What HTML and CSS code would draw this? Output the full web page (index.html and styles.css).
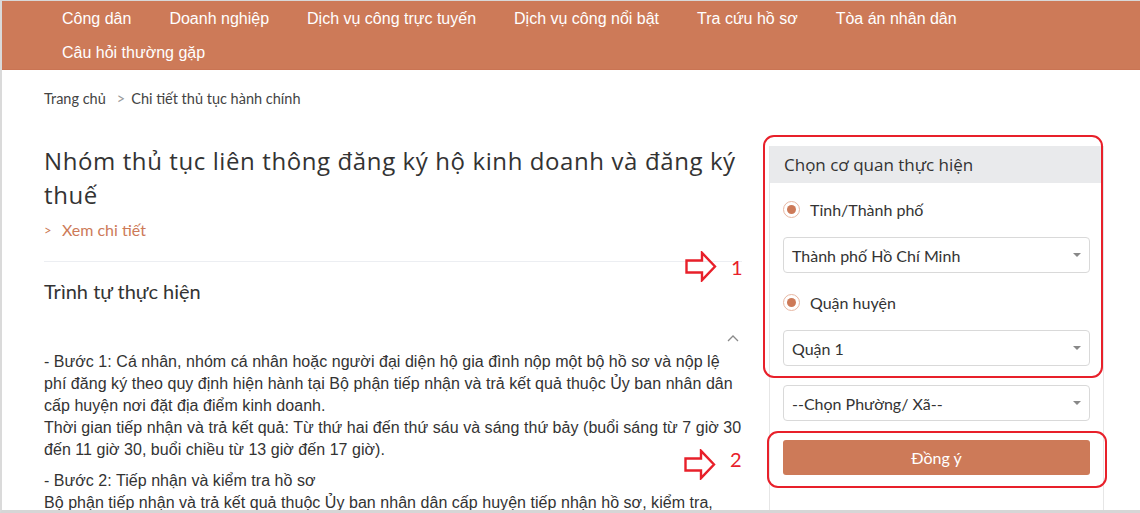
FILE: index.html
```html
<!DOCTYPE html>
<html lang="vi">
<head>
<meta charset="utf-8">
<title>Chi tiết thủ tục hành chính</title>
<link rel="stylesheet" href="styles.css">
</head>
<body>
<div class="frame">
  <header class="topbar">
    <nav class="nav">
      <a>Công dân</a>
      <a>Doanh nghiệp</a>
      <a>Dịch vụ công trực tuyến</a>
      <a>Dịch vụ công nổi bật</a>
      <a>Tra cứu hồ sơ</a>
      <a>Tòa án nhân dân</a>
      <a>Câu hỏi thường gặp</a>
    </nav>
  </header>

  <main class="main">
    <div class="breadcrumb">
      <span>Trang chủ</span><span class="sep">&gt;</span><span>Chi tiết thủ tục hành chính</span>
    </div>

    <div class="columns">
      <section class="content">
        <h1 class="title">Nhóm thủ tục liên thông đăng ký hộ kinh doanh và đăng ký thuế</h1>
        <div class="more"><span class="more-chev">&gt;</span><span>Xem chi tiết</span></div>
        <div class="divider"></div>
        <h2 class="section-title">Trình tự thực hiện</h2>
        <div class="collapse-row">
          <svg class="chev-up" width="12" height="8" viewBox="0 0 12 8"><path d="M1 7 L6 2 L11 7" fill="none" stroke="#8a8a8a" stroke-width="1.3"/></svg>
        </div>
        <div class="body-text">
          <p>- Bước 1: Cá nhân, nhóm cá nhân hoặc người đại diện hộ gia đình nộp một bộ hồ sơ và nộp lệ phí đăng ký theo quy định hiện hành tại Bộ phận tiếp nhận và trả kết quả thuộc Ủy ban nhân dân cấp huyện nơi đặt địa điểm kinh doanh.<br>Thời gian tiếp nhận và trả kết quả: Từ thứ hai đến thứ sáu và sáng thứ bảy (buổi sáng từ 7 giờ 30 đến 11 giờ 30, buổi chiều từ 13 giờ đến 17 giờ).</p>
          <p>- Bước 2: Tiếp nhận và kiểm tra hồ sơ<br>Bộ phận tiếp nhận và trả kết quả thuộc Ủy ban nhân dân cấp huyện tiếp nhận hồ sơ, kiểm tra, đối&nbsp;chiếu thông tin.</p>
        </div>
      </section>

      <aside class="card">
        <div class="card-head">Chọn cơ quan thực hiện</div>
        <div class="card-body">
          <label class="radio"><span class="radio-dot"></span>Tỉnh/Thành phố</label>
          <div class="select"><span>Thành phố Hồ Chí Minh</span><span class="caret"></span></div>
          <label class="radio"><span class="radio-dot"></span>Quận huyện</label>
          <div class="select"><span>Quận 1</span><span class="caret"></span></div>
          <div class="select select-gap"><span>--Chọn Phường/ Xã--</span><span class="caret"></span></div>
          <button class="btn">Đồng ý</button>
        </div>
      </aside>
    </div>
  </main>

  <!-- annotation overlays -->
  <div class="mark mark-1"></div>
  <div class="mark mark-2"></div>
  <div class="note note-1">
    <svg width="32" height="31" viewBox="0 0 32 31"><path d="M1.5 9.5 H17 V1.8 L30 15.5 L17 29.2 V21.5 H1.5 Z" fill="none" stroke="#e8202a" stroke-width="2.4" stroke-linejoin="miter"/></svg>
    <span>1</span>
  </div>
  <div class="note note-2">
    <svg width="32" height="31" viewBox="0 0 32 31"><path d="M1.5 9.5 H17 V1.8 L30 15.5 L17 29.2 V21.5 H1.5 Z" fill="none" stroke="#e8202a" stroke-width="2.4" stroke-linejoin="miter"/></svg>
    <span>2</span>
  </div>
</div>
</body>
</html>
```
FILE: styles.css
```css
* { box-sizing: border-box; }
html, body { margin: 0; padding: 0; background: #fff; }
body {
  font-family: "Lato", "Liberation Sans", Arial, sans-serif;
  color: #333;
}
.frame {
  position: relative;
  width: 1140px;
  height: 513px;
  overflow: hidden;
  border-left: 2px solid #dadada;
  border-top: 1px solid #d8d8d8;
  border-bottom: 3px solid #d6d6d6;
}
.topbar {
  background: #cd7a58;
  height: 69px;
  border-bottom: 1px solid #c97453;
}
.nav {
  display: flex;
  flex-wrap: wrap;
  column-gap: 38px;
  padding-left: 60px;
  padding-right: 120px;
  padding-top: 1px;
}
.nav a {
  color: #fff;
  font-family: "Liberation Sans", Arial, sans-serif;
  font-size: 16px;
  line-height: 34px;
  text-decoration: none;
}
.main {
  padding-left: 42px;
}
.breadcrumb {
  margin-top: 19px;
  font-size: 14.5px;
  line-height: 20px;
  color: #444;
  display: flex;
}
.breadcrumb .sep {
  color: #999;
  margin: 0 6px 0 11px;
}
.columns {
  display: flex;
  margin-top: 35px;
}
.content {
  width: 698px;
}
.title {
  margin: 0;
  font-family: "Open Sans", "Lato", sans-serif;
  font-weight: 400;
  font-size: 24px;
  letter-spacing: 0.6px;
  line-height: 34px;
  color: #333;
}
.more {
  margin-top: 8px;
  line-height: 20px;
  font-size: 16px;
  color: #cd7a58;
  display: flex;
}
.more-chev {
  font-size: 13px;
  width: 18px;
}
.divider {
  margin-top: 21px;
  height: 1px;
  background: #eceef2;
  width: 698px;
}
.section-title {
  margin: 15px 0 0;
  font-weight: 400;
  font-size: 20px;
  line-height: 28px;
  color: #333;
}
.collapse-row {
  height: 46px;
  display: flex;
  justify-content: flex-end;
  align-items: flex-end;
  padding-right: 3px;
  padding-bottom: 9px;
}
.body-text {
  font-family: "Liberation Sans", Arial, sans-serif;
  font-size: 16px;
  line-height: 22px;
  letter-spacing: 0.04px;
  color: #333;
  width: 698px;
}
.body-text p { margin: 0 0 9px; }

.card {
  margin-left: 27px;
  width: 335px;
  height: 400px;
  margin-top: 2px;
  border: 1px solid #e6e6e6;
  border-top: none;
}
.card-head {
  background: #e9eaec;
  height: 37px;
  line-height: 37px;
  font-family: "Open Sans", "Lato", sans-serif;
  font-size: 17px;
  padding-left: 14px;
  color: #333;
}
.card-body {
  padding: 14px 13px 0 13px;
  display: flex;
  flex-direction: column;
}
.radio {
  display: flex;
  align-items: center;
  height: 24px;
  font-size: 16px;
  color: #333;
  margin-bottom: 16px;
}
.radio-dot {
  width: 17px;
  height: 17px;
  border-radius: 50%;
  border: 1px solid #e7b7a3;
  margin-right: 10px;
  display: flex;
  align-items: center;
  justify-content: center;
}
.radio-dot::after {
  content: "";
  width: 9px;
  height: 9px;
  border-radius: 50%;
  background: #cd7a58;
}
.select {
  height: 36px;
  border: 1px solid #d9d9d9;
  border-radius: 4px;
  display: flex;
  align-items: center;
  justify-content: space-between;
  padding: 0 8px 0 8px;
  font-size: 16px;
  color: #333;
  margin-bottom: 17px;
}
.select-gap { margin-top: 2px; margin-bottom: 19px; }
.caret {
  width: 0; height: 0;
  border-left: 4px solid transparent;
  border-right: 4px solid transparent;
  border-top: 4px solid #888;
}
.btn {
  height: 35px;
  background: #cd7a58;
  border: none;
  border-radius: 3px;
  color: #fff;
  font-family: "Lato", "Liberation Sans", Arial, sans-serif;
  font-size: 16px;
  padding: 0;
}

/* annotation overlays */
.mark {
  position: absolute;
  border: 2.5px solid #e8202a;
  border-radius: 11px;
}
.mark-1 { left: 761px; top: 134px; width: 340px; height: 243px; }
.mark-2 { left: 765px; top: 430px; width: 340px; height: 57px; }
.note {
  position: absolute;
  display: flex;
  align-items: center;
  color: #e8202a;
  font-size: 20px;
}
.note svg { display: block; }
.note span { margin-left: 14px; line-height: 20px; }
.note-1 { left: 683px; top: 250px; }
.note-2 { left: 682px; top: 448px; }
.note-2 span { margin-top: -12px; }
```
